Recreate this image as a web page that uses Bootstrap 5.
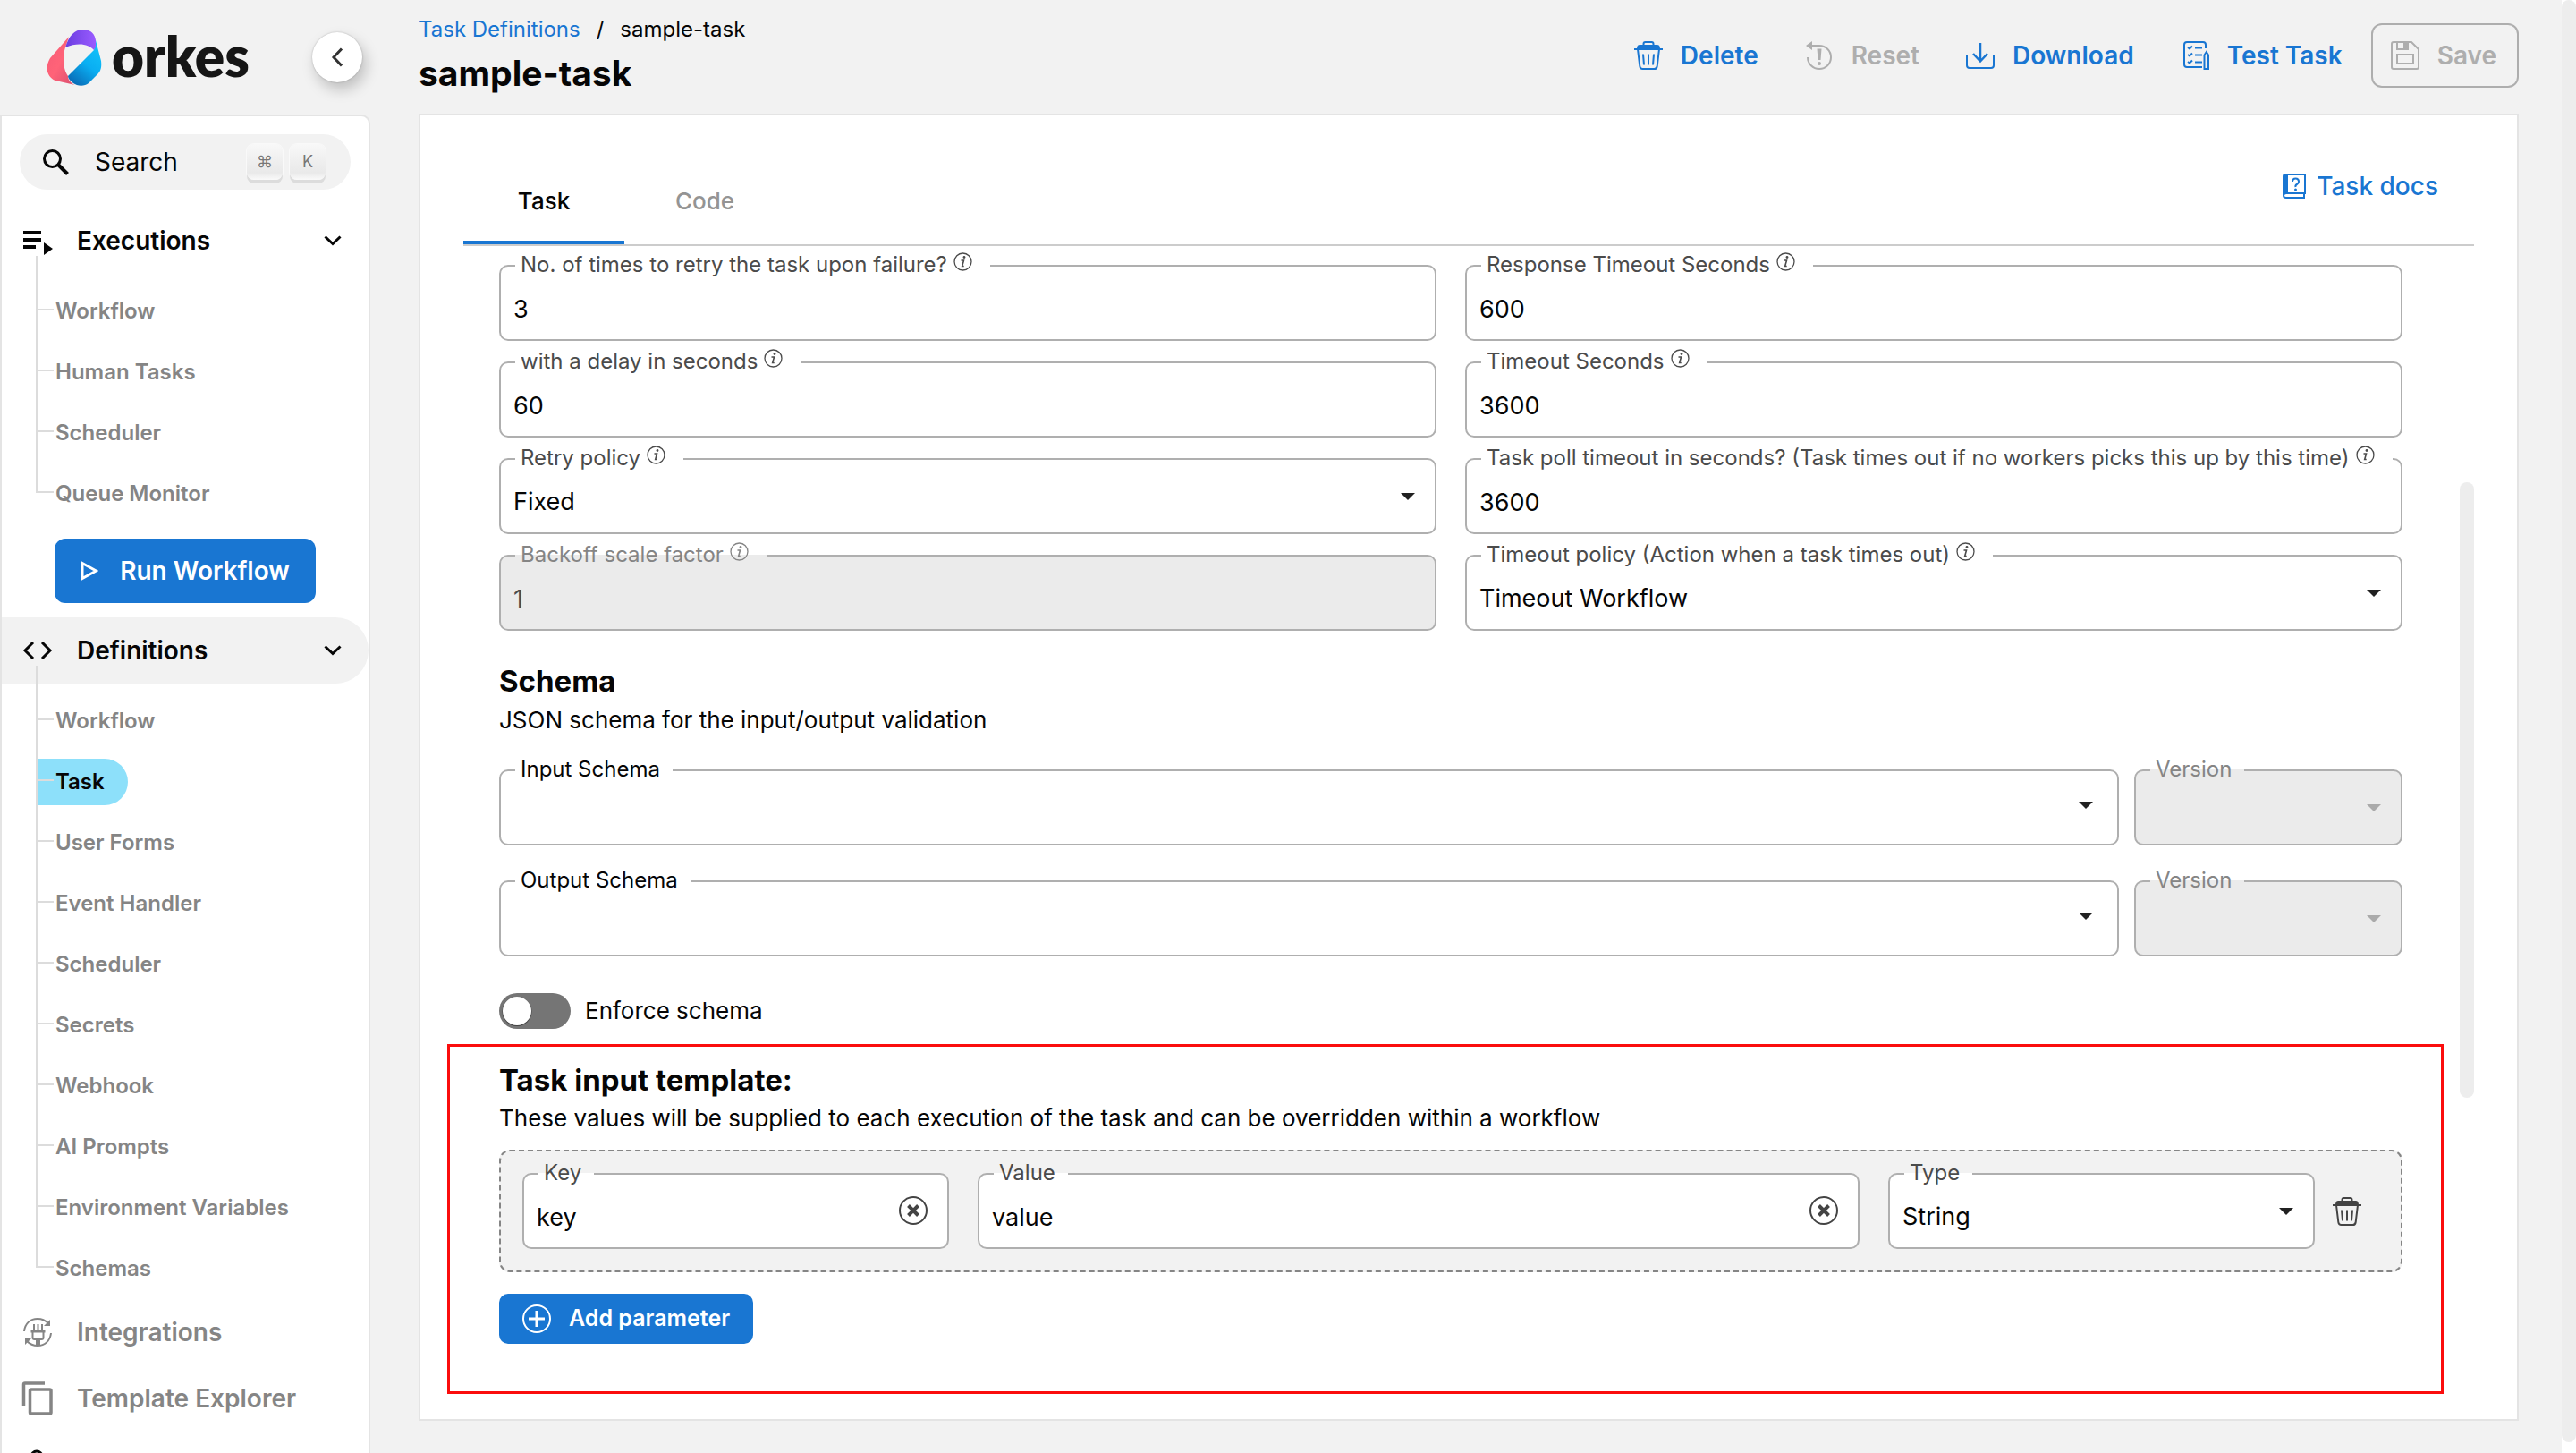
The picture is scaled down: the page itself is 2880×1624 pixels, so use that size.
<!DOCTYPE html>
<html lang="en">
<head>
<meta charset="utf-8">
<meta name="viewport" content="width=device-width, initial-scale=1">
<title>sample-task - Task Definitions</title>
<link href="https://cdn.jsdelivr.net/npm/bootstrap@5.3.0/dist/css/bootstrap.min.css" rel="stylesheet">
<style>
:root{--blue:#1976d2;--line:#e4e4e4;--edge:#afafaf;--muted:#858585;--off:#aeaeae}
body{font-family:Inter,"Open Sans",sans-serif;background:#f2f2f2;color:#060606;font-size:26px;line-height:32px}
svg{display:block;flex:none}
a{text-decoration:none}
button{font-weight:500}

/* sidebar */
.side{width:414px}
.brand-bar{height:128px;padding:0 9px 0 52px}
.wordmark{font:800 62px/62px Lato,sans-serif;color:#161616;margin:0 0 4px 11px}
.collapse-btn{width:56px;height:56px;border-radius:50%;background:#fff;border:0;box-shadow:4px 8px 16px rgba(0,0,0,.22),0 0 2px rgba(0,0,0,.25);color:#333}
.side-panel{background:#fff;border:2px solid var(--line);border-bottom:0;border-radius:0 10px 0 0}
.search-pill{margin:20px;height:62px;border-radius:31px;background:#f2f2f2;padding:0 28px 0 24px;border:0;font-size:28px;font-weight:400;color:#060606}
.keycap{width:40px;height:40px;border-radius:8px;background:linear-gradient(#f8f8f8,#e9e9e9 80%,#fafafa);box-shadow:0 4px 0 #dcdcdc,0 0 0 1px #f9f9f9;font:400 18px/40px Inter,sans-serif;color:#777;text-align:center;padding:0}
.nav-row{height:74px;padding:0 30px 0 22px;font-size:28px;font-weight:600;color:#060606;border-radius:0 37px 37px 0;border:0;background:none;text-align:left}
.nav-row.dim{color:var(--muted)}
.nav-row.current{background:#f2f2f2}
.nav-row .nav-ico{width:36px;margin-right:26px}
.tree{list-style:none;margin:8px 0 0;padding:0 0 0 40px;position:relative}
.tree::before{content:"";position:absolute;left:38px;top:-28px;bottom:35px;width:2px;background:#dcdcdc}
.tree li{height:68px;display:flex;align-items:center;position:relative}
.tree li::before{content:"";position:absolute;left:0;top:31px;width:18px;height:2px;background:#dcdcdc}
.tree a{height:52px;line-height:52px;padding:0 28px 0 20px;color:var(--muted);font-size:24px;font-weight:600;border-radius:0 26px 26px 0}
.tree a.active{background:#8de0fa;color:#060606;padding-right:26px}
.run-btn{margin:16px 0 16px 59px;width:292px;height:72px;border-radius:12px;font-size:28px;font-weight:600;background:var(--blue)}

/* page header */
.page-head{height:127px;padding:15px 0 0}
.crumbs{--bs-breadcrumb-divider:"/";--bs-breadcrumb-divider-color:#060606;--bs-breadcrumb-item-padding-x:18px;--bs-breadcrumb-item-active-color:#060606;font-size:24px;line-height:36px;margin:0}
.crumbs a{color:var(--blue)}
.page-title{font-size:39px;line-height:48px;font-weight:700;margin:7px 0 0}
.tool-btn{border:0;padding:0;gap:20px;font-size:28px;font-weight:600;color:var(--blue);background:none}
.tool-btn:disabled{color:var(--off);opacity:1;border-color:var(--off)}
.tool-btn.save{border:2px solid var(--off);border-radius:12px;height:72px;padding:0 23px 0 20px;margin-left:-20px}
.tools{gap:52px;margin-top:11px;height:72px}

/* main card */
.main-col{padding:0 48px 36px 54px}
.sheet{background:#fff;border:2px solid var(--line)}
.tab-strip{margin:48px 48px 0;border-bottom:2px solid #ccc;height:98px}
.tab-btn{min-width:180px;height:96px;border:0;border-bottom:4px solid transparent;background:none;font-size:26px;color:#949494;padding:4px 0 0}
.tab-btn.active{color:#060606;border-bottom-color:var(--blue)}
.docs-link{font-size:28px;line-height:40px;font-weight:500;color:var(--blue);gap:12px;margin:11px 40px 0 0}
.form-area{padding:21px 18px 0 30px}
.block{padding:0 46px 0 58px}
.scroll-track{width:16px;margin-right:48px;padding-top:264px}
.scroll-thumb{height:688px;border-radius:8px;background:#ededed}
.page-scroll{width:16px;background:#fff}
.page-scroll div{height:calc(100% - 12px);border-radius:8px;background:#ededed}
.fields{--bs-gutter-x:32px;--bs-gutter-y:23px}

.fld{position:relative}
.fld>label{position:absolute;left:18px;top:-16px;display:flex;gap:7px;font-size:24px;line-height:32px;padding:0 14px 0 6px;color:#4b4b4b;background:linear-gradient(#fff,#fff) 0 16px/100% 2px no-repeat;white-space:nowrap}
.fld>label.with-tip{padding-right:20px}
.fld>label.strong{color:#060606}
.fld>label svg{margin-top:2px}
.fld .form-control,.fld .form-select{height:85px;border:2px solid var(--edge);border-radius:10px;padding:14px 14px 0;font-size:27px;color:#060606;background-color:#fff;box-shadow:none}
.fld .form-select{padding-right:60px;background-image:url("data:image/svg+xml,%3Csvg xmlns='http://www.w3.org/2000/svg' viewBox='0 0 16 8'%3E%3Cpath d='M0 0h16L8 8z' fill='%23212121'/%3E%3C/svg%3E");background-size:16px 8px;background-position:right 22px center}
.fld .form-select.combo{background-position:right 27px top 34px}
.fld.is-off>label{color:var(--muted);background-image:linear-gradient(#ebebeb,#ebebeb)}
.fld.is-off .form-control,.fld.is-off .form-select{background-color:#ebebeb;color:#4b4b4b;opacity:1}
.fld.is-off .form-select{background-image:url("data:image/svg+xml,%3Csvg xmlns='http://www.w3.org/2000/svg' viewBox='0 0 16 8'%3E%3Cpath d='M0 0h16L8 8z' fill='%23aaa'/%3E%3C/svg%3E")}
.clear-btn{position:absolute;right:24px;top:26px;border:0;background:none;padding:0;color:#444}
.sec-title{font-size:33px;line-height:40px;font-weight:700;margin:0}
.schema-title{margin-top:36px}
.version{flex:0 0 300px}
.schema-row{gap:17px;margin-top:39px}
.switch-row{margin-top:41px;min-height:40px;gap:16px;padding:0}
.switch-row .form-check-input{width:80px;height:40px;margin:0;float:none;border:0;border-radius:20px;background-color:#757575;background-image:url("data:image/svg+xml,%3Csvg xmlns='http://www.w3.org/2000/svg' viewBox='0 0 40 40'%3E%3Ccircle cx='20' cy='20.5' r='16.5' fill='%23444'/%3E%3Ccircle cx='20' cy='20' r='16' fill='%23fff'/%3E%3C/svg%3E");background-size:40px 40px;background-position:left center}
.marked{border:3px solid #fb0d0d;margin-top:17px;padding:17px 43px 53px 55px}
.marked p{margin:7px 0 0}
.param-box{border:2px dashed #858585;border-radius:12px;background:#f2f2f2;padding:24px;margin-top:19px}
.params{--bs-gutter-x:32px}
.trash-btn{border:0;background:none;padding:0;margin:0 20px 0 20px;color:#444}
.add-btn{margin-top:24px;height:56px;border-radius:10px;padding:0 26px;gap:20px;font-size:25px;font-weight:600;background:var(--blue);border:0}
</style>
<script src="https://cdn.jsdelivr.net/npm/bootstrap@5.3.0/dist/js/bootstrap.bundle.min.js"></script>
</head>
<body class="d-flex vh-100 overflow-hidden">
<svg width="0" height="0" class="position-absolute" aria-hidden="true">
  <symbol id="i-tip" viewBox="0 0 21 21"><circle cx="10.500" cy="10.500" r="9.500" fill="none" stroke="currentColor" stroke-width="1.300"/><path d="M8.500 9h3l-1.800 6.500h2" fill="none" stroke="currentColor" stroke-width="1.600"/><circle cx="12" cy="5.500" r="1.400" fill="currentColor"/></symbol>
  <symbol id="i-trash" viewBox="0 0 32 32"><path d="M10.500 4V3q0-2 2-2h7q2 0 2 2v1" fill="none" stroke="currentColor" stroke-width="2"/><path d="M3 8l.6-2.500Q4 4 6 4h20q2 0 2.400 1.500L29 8h3v2H0V8z" fill="currentColor"/><path d="M4 9l2.300 19q.4 3 3.200 3h13q2.800 0 3.200-3L28 9M10 14.500l1 12M16 14.500v12M22 14.500l-1 12" fill="none" stroke="currentColor" stroke-width="2"/></symbol>
  <symbol id="i-clear" viewBox="0 0 32 32"><circle cx="16" cy="16" r="15" fill="none" stroke="currentColor" stroke-width="2"/><path d="M10.500 10.500l11 11M21.500 10.500l-11 11" stroke="currentColor" stroke-width="4"/></symbol>
  <symbol id="i-chev" viewBox="0 0 20 12"><path d="M1.500 1.500l8.500 8 8.500-8" fill="none" stroke="currentColor" stroke-width="3"/></symbol>
</svg>

<aside class="side d-flex flex-column flex-shrink-0">
  <div class="brand-bar d-flex align-items-center flex-shrink-0">
    <svg width="62" height="64" viewBox="0 0 62 64" aria-label="Orkes">
      <defs>
        <linearGradient id="gp" x1="0" x2="1"><stop stop-color="#6a3de0"/><stop offset="1" stop-color="#9a5cff"/></linearGradient>
        <linearGradient id="gr" x1="0" x2="1" y1="0" y2="1"><stop stop-color="#f55b76"/><stop offset=".5" stop-color="#ff6378"/><stop offset="1" stop-color="#d84e70"/></linearGradient>
        <linearGradient id="gb" x1=".8" x2=".2" y1="0" y2="1"><stop stop-color="#12c4fa"/><stop offset=".5" stop-color="#0aaef2"/><stop offset="1" stop-color="#0a69b4"/></linearGradient>
      </defs>
      <path d="M25 9L4 33C-3 45 2 55 10 58L32 63C27 61 24 57 24 53C18 45 18 30 21 21Z" fill="url(#gr)"/>
      <path d="M55 13L61 36C62 44 60 48 57 51L47 61C42 65 34 64 30 61C26 58 24 55 24 53L53 24Z" fill="url(#gb)"/>
      <path d="M21 21C25 8 31 1 41 1C50 1 54 6 55 13L55 20L53 24C47 17 35 15 21 21Z" fill="url(#gp)"/>
    </svg>
    <span class="wordmark">orkes</span>
    <button class="collapse-btn ms-auto d-flex align-items-center justify-content-center" aria-label="Collapse menu">
      <svg width="14" height="22" viewBox="0 0 14 22"><path d="M12 1.500L3 11l9 9.500" fill="none" stroke="currentColor" stroke-width="3"/></svg>
    </button>
  </div>
  <nav class="side-panel flex-grow-1 overflow-hidden d-flex flex-column">
    <button class="search-pill d-flex align-items-center flex-shrink-0">
      <svg width="32" height="32" viewBox="0 0 32 32" class="me-4"><circle cx="12.500" cy="12.500" r="9" fill="none" stroke="currentColor" stroke-width="3"/><path d="M19 19l10.500 10.500" stroke="currentColor" stroke-width="4"/></svg>
      <span class="ms-1 me-auto">Search</span>
      <kbd class="keycap me-2">⌘</kbd><kbd class="keycap">K</kbd>
    </button>
    <button class="nav-row d-flex align-items-center flex-shrink-0">
      <svg class="nav-ico" width="36" height="32" viewBox="0 0 36 32"><path d="M2 7h20M2 15h20M2 23h14" stroke="currentColor" stroke-width="4"/><path d="M25 18v14l10-7z" fill="currentColor"/></svg>
      <span class="me-auto">Executions</span><svg width="20" height="12"><use href="#i-chev"/></svg>
    </button>
    <ul class="tree flex-shrink-0">
      <li><a href="#">Workflow</a></li><li><a href="#">Human Tasks</a></li><li><a href="#">Scheduler</a></li><li><a href="#">Queue Monitor</a></li>
    </ul>
    <button class="run-btn btn btn-primary border-0 d-flex align-items-center justify-content-center flex-shrink-0">
      <svg width="20" height="22" viewBox="0 0 20 22" class="me-4"><path d="M2 2.500v17L17.500 11z" fill="none" stroke="currentColor" stroke-width="3"/></svg><span>Run Workflow</span>
    </button>
    <button class="nav-row current d-flex align-items-center flex-shrink-0">
      <svg class="nav-ico" width="36" height="32" viewBox="0 0 36 32"><path d="M13 7L4 16l9 9M23 7l9 9-9 9" fill="none" stroke="currentColor" stroke-width="3"/></svg>
      <span class="me-auto">Definitions</span><svg width="20" height="12"><use href="#i-chev"/></svg>
    </button>
    <ul class="tree flex-shrink-0">
      <li><a href="#">Workflow</a></li><li><a href="#" class="active">Task</a></li><li><a href="#">User Forms</a></li><li><a href="#">Event Handler</a></li><li><a href="#">Scheduler</a></li><li><a href="#">Secrets</a></li><li><a href="#">Webhook</a></li><li><a href="#">AI Prompts</a></li><li><a href="#">Environment Variables</a></li><li><a href="#">Schemas</a></li>
    </ul>
    <a href="#" class="nav-row dim d-flex align-items-center flex-shrink-0">
      <svg class="nav-ico" width="36" height="36" viewBox="0 0 36 36"><g fill="none" stroke="currentColor" stroke-width="2"><path d="M3 17C4 8 10 3 18 3q7 0 12 5M33 19c-1 9-7 14-15 14q-7 0-12-5M17 25v8M20 25v8"/><path d="M12.500 18v6q0 2 2 2h8q2 0 2-2v-6"/></g><path d="M11 15h2V9h2v6h2.500V9h2v6H22V9h2v6h2.500v3.500h-16V15zM32 4v7h-7zM4 32v-7h7z" fill="currentColor"/></svg>
      <span>Integrations</span>
    </a>
    <a href="#" class="nav-row dim d-flex align-items-center flex-shrink-0">
      <svg class="nav-ico" width="36" height="40" viewBox="0 0 36 40"><g fill="none" stroke="currentColor" stroke-width="3.500"><path d="M2.500 29V4.500Q2.500 3 4 3h22"/><rect x="9.500" y="10" width="23.500" height="27" rx="1.500"/></g></svg>
      <span>Template Explorer</span>
    </a>
    <a href="#" class="nav-row d-flex align-items-center flex-shrink-0" aria-label="Access control">
      <svg class="nav-ico" width="36" height="34" viewBox="0 0 36 34"><circle cx="17" cy="8" r="6" fill="none" stroke="currentColor" stroke-width="3"/><path d="M3 32v-5q0-7 12-7" fill="none" stroke="currentColor" stroke-width="3"/></svg>
    </a>
  </nav>
</aside>

<main class="main-col flex-grow-1 d-flex flex-column">
  <header class="page-head d-flex justify-content-between flex-shrink-0">
    <div>
      <ol class="breadcrumb crumbs"><li class="breadcrumb-item"><a href="#">Task Definitions</a></li><li class="breadcrumb-item active">sample-task</li></ol>
      <h1 class="page-title">sample-task</h1>
    </div>
    <div class="tools d-flex align-items-center">
      <button class="tool-btn d-flex align-items-center"><svg width="32" height="32"><use href="#i-trash"/></svg>Delete</button>
      <button class="tool-btn d-flex align-items-center" disabled><svg width="32" height="32" viewBox="0 0 32 32"><path d="M5 5h11a13 13 0 1 1-13 13" fill="none" stroke="currentColor" stroke-width="2"/><path d="M1 5l7-5v10zM13.500 8.500h5L17.500 21h-3z" fill="currentColor"/><circle cx="16" cy="25" r="2" fill="currentColor"/></svg>Reset</button>
      <button class="tool-btn d-flex align-items-center"><svg width="32" height="32" viewBox="0 0 32 32"><path d="M1 16v11q0 3 3 3h24q3 0 3-3V16" fill="none" stroke="currentColor" stroke-width="2"/><path d="M16 2v20M8 14l8 8.500 8-8.500" fill="none" stroke="currentColor" stroke-width="2.500"/></svg>Download</button>
      <button class="tool-btn d-flex align-items-center"><svg width="32" height="32" viewBox="0 0 32 32"><g fill="none" stroke="currentColor" stroke-width="2"><path d="M24 29H7q-3 0-3-3V4q0-3 3-3h18q3 0 3 3v4M16 7.500h8M16 15.500h8M16 23.500h8"/><path d="M8 7l2 1.500L13 5.500M8 15l2 1.500 3-3M8 23l2 1.500 3-3"/><path d="M26.500 31V15.500L28.800 12l2.200 3.500V31z"/></g></svg>Test Task</button>
      <button class="tool-btn save d-flex align-items-center" disabled><svg width="32" height="32" viewBox="0 0 32 32"><path d="M3 1h20l8 8v20q0 2-2 2H3q-2 0-2-2V3q0-2 2-2zM7 1v8h12V1M7 15h18v10H7z" fill="none" stroke="currentColor" stroke-width="2"/><path d="M14 1h5v8h-5z" fill="currentColor"/></svg>Save</button>
    </div>
  </header>

  <section class="sheet flex-grow-1 d-flex flex-column overflow-hidden">
    <div class="tab-strip d-flex justify-content-between flex-shrink-0">
      <div class="d-flex" role="tablist"><button class="tab-btn active" role="tab">Task</button><button class="tab-btn" role="tab">Code</button></div>
      <a href="#" class="docs-link d-flex align-items-center align-self-start"><svg width="26" height="28" viewBox="0 0 26 28"><path d="M3 1h22v21H4q-3 0-3 2.500T4 27h21M24 22v5M1 24V3q0-2 2-2" fill="none" stroke="currentColor" stroke-width="2"/><path d="M1 2h5v20H1z" fill="currentColor"/><path d="M11 9q0-3.500 3.500-3.500T18 9q0 2-2 3t-1.500 3" fill="none" stroke="currentColor" stroke-width="2"/><circle cx="14.500" cy="18" r="1.500" fill="currentColor"/></svg>Task docs</a>
    </div>
    <div class="d-flex flex-grow-1">
      <form class="form-area flex-grow-1">
        <div class="block">
          <div class="row fields">
            <div class="col-6"><div class="fld"><input class="form-control" id="retry" value="3"><label class="with-tip" for="retry">No. of times to retry the task upon failure?<svg width="21" height="21"><use href="#i-tip"/></svg></label></div></div>
            <div class="col-6"><div class="fld"><input class="form-control" id="resp" value="600"><label class="with-tip" for="resp">Response Timeout Seconds<svg width="21" height="21"><use href="#i-tip"/></svg></label></div></div>
            <div class="col-6"><div class="fld"><input class="form-control" id="delay" value="60"><label class="with-tip" for="delay">with a delay in seconds<svg width="21" height="21"><use href="#i-tip"/></svg></label></div></div>
            <div class="col-6"><div class="fld"><input class="form-control" id="tsec" value="3600"><label class="with-tip" for="tsec">Timeout Seconds<svg width="21" height="21"><use href="#i-tip"/></svg></label></div></div>
            <div class="col-6"><div class="fld"><select class="form-select" id="policy"><option>Fixed</option></select><label class="with-tip" for="policy">Retry policy<svg width="21" height="21"><use href="#i-tip"/></svg></label></div></div>
            <div class="col-6"><div class="fld"><input class="form-control" id="poll" value="3600"><label class="with-tip" for="poll">Task poll timeout in seconds? (Task times out if no workers picks this up by this time)<svg width="21" height="21"><use href="#i-tip"/></svg></label></div></div>
            <div class="col-6"><div class="fld is-off"><input class="form-control" id="backoff" value="1" disabled><label class="with-tip" for="backoff">Backoff scale factor<svg width="21" height="21"><use href="#i-tip"/></svg></label></div></div>
            <div class="col-6"><div class="fld"><select class="form-select" id="tpolicy"><option>Timeout Workflow</option></select><label class="with-tip" for="tpolicy">Timeout policy (Action when a task times out)<svg width="21" height="21"><use href="#i-tip"/></svg></label></div></div>
          </div>
          <h2 class="sec-title schema-title">Schema</h2>
          <p class="mt-2 mb-0">JSON schema for the input/output validation</p>
          <div class="schema-row d-flex">
            <div class="fld flex-grow-1"><select class="form-select combo" id="ins"><option></option></select><label class="strong" for="ins">Input Schema</label></div>
            <div class="fld is-off version"><select class="form-select" id="inv" disabled><option></option></select><label for="inv">Version</label></div>
          </div>
          <div class="schema-row d-flex">
            <div class="fld flex-grow-1"><select class="form-select combo" id="outs"><option></option></select><label class="strong" for="outs">Output Schema</label></div>
            <div class="fld is-off version"><select class="form-select" id="outv" disabled><option></option></select><label for="outv">Version</label></div>
          </div>
          <div class="form-check form-switch switch-row d-flex align-items-center mb-0">
            <input class="form-check-input" type="checkbox" role="switch" id="enforce"><label class="form-check-label" for="enforce">Enforce schema</label>
          </div>
        </div>
        <div class="marked">
          <h2 class="sec-title">Task input template:</h2>
          <p>These values will be supplied to each execution of the task and can be overridden within a workflow</p>
          <div class="param-box d-flex align-items-center">
            <div class="flex-grow-1">
              <div class="row params">
                <div class="col-3"><div class="fld"><input class="form-control" id="pkey" value="key"><label for="pkey">Key</label><button type="button" class="clear-btn" aria-label="Clear key"><svg width="32" height="32"><use href="#i-clear"/></svg></button></div></div>
                <div class="col-6"><div class="fld"><input class="form-control" id="pval" value="value"><label for="pval">Value</label><button type="button" class="clear-btn" aria-label="Clear value"><svg width="32" height="32"><use href="#i-clear"/></svg></button></div></div>
                <div class="col-3"><div class="fld"><select class="form-select" id="ptype"><option>String</option></select><label for="ptype">Type</label></div></div>
              </div>
            </div>
            <button type="button" class="trash-btn" aria-label="Remove parameter"><svg width="32" height="32"><use href="#i-trash"/></svg></button>
          </div>
          <button type="button" class="add-btn btn btn-primary d-flex align-items-center"><svg width="32" height="32" viewBox="0 0 32 32"><circle cx="16" cy="16" r="15" fill="none" stroke="currentColor" stroke-width="2"/><path d="M16 7v18M7 16h18" stroke="currentColor" stroke-width="3"/></svg>Add parameter</button>
        </div>
      </form>
      <div class="scroll-track flex-shrink-0"><div class="scroll-thumb"></div></div>
    </div>
  </section>
</main>
<div class="page-scroll flex-shrink-0"><div></div></div>
</body>
</html>
